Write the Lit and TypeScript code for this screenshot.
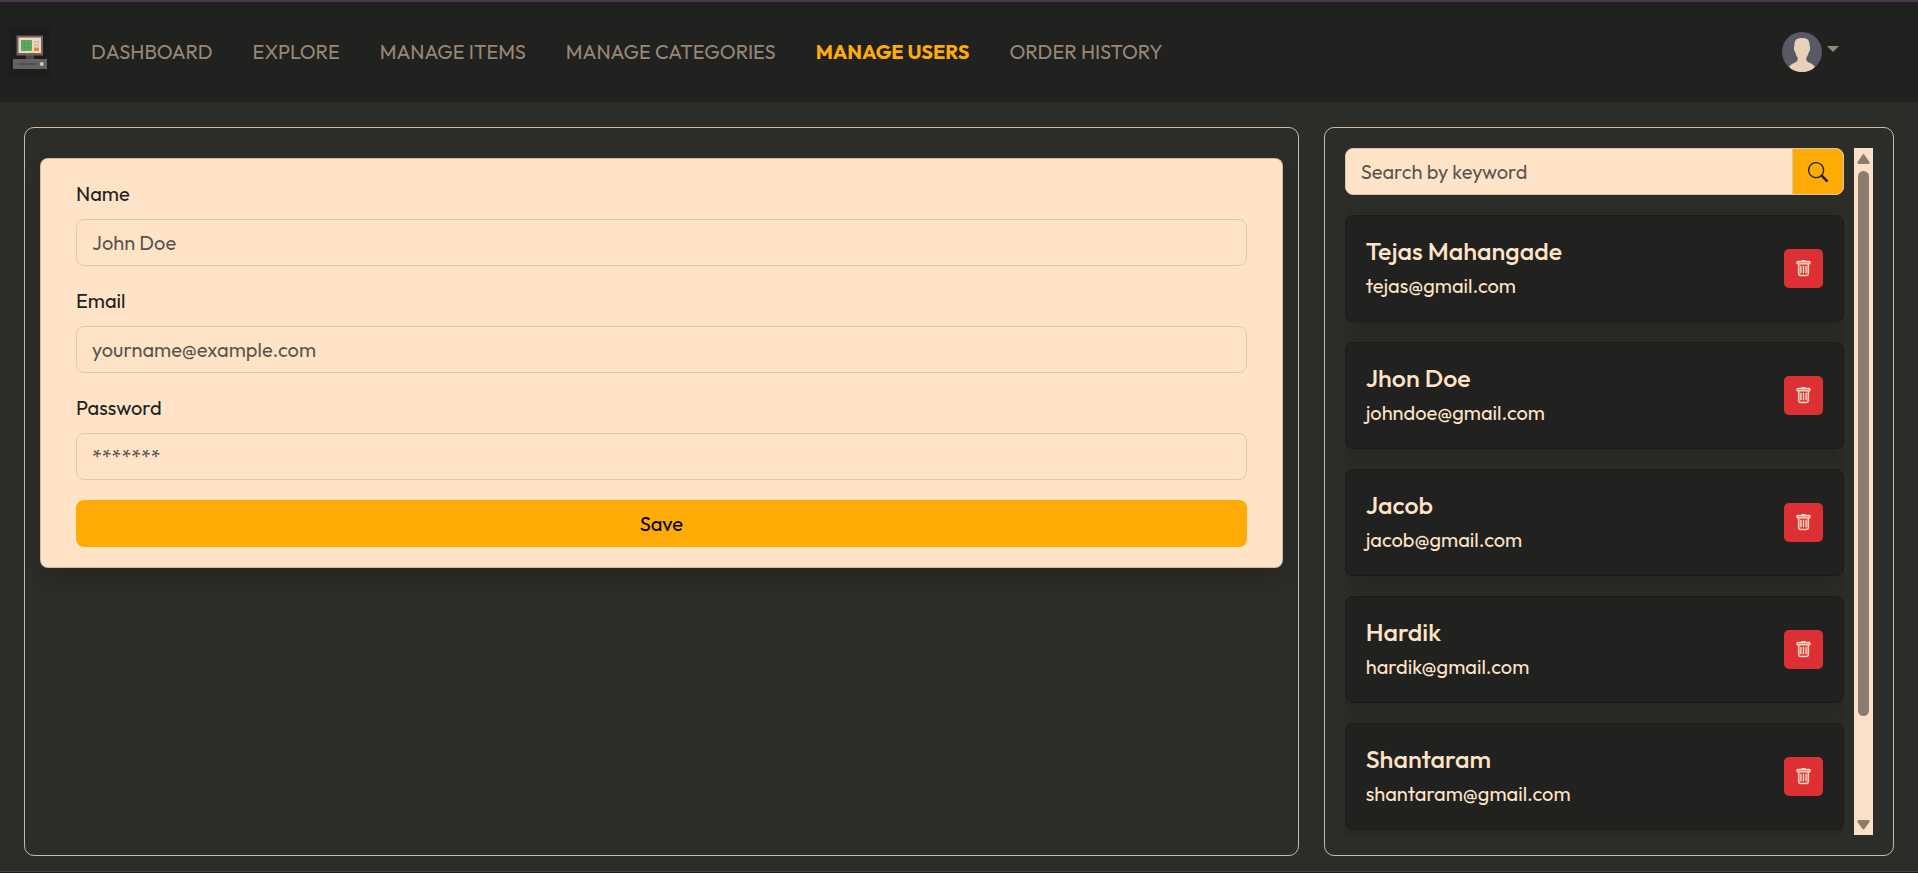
import { LitElement, css, html, svg } from "lit";
import { customElement, property, state } from "lit/decorators.js";
import { classMap } from "lit/directives/class-map.js";

interface User {
  name: string;
  email: string;
}

const LINKS = [
  "Dashboard",
  "Explore",
  "Manage Items",
  "Manage Categories",
  "Manage Users",
  "Order History",
];

const USERS: User[] = [
  { name: "Tejas Mahangade", email: "tejas@gmail.com" },
  { name: "Jhon Doe", email: "johndoe@gmail.com" },
  { name: "Jacob", email: "jacob@gmail.com" },
  { name: "Hardik", email: "hardik@gmail.com" },
  { name: "Shantaram", email: "shantaram@gmail.com" },
];

const logo = svg`
  <rect width="42" height="50" fill="#1e1d1b" />
  <rect x="17" y="28" width="8" height="5" fill="#4a4a48" />
  <rect x="7.500" y="8.500" width="26.500" height="20" fill="#6d655c" />
  <rect x="9.500" y="10.500" width="22.500" height="15.500" fill="#eed7be" />
  <rect x="12" y="13" width="11" height="11" fill="#5dab61" />
  <path d="M12 16.700h11M12 20.400h11M15.700 13v11M19.400 13v11" stroke="#4c9a52" stroke-width=".6" />
  <path d="M25 15h5M25 18h5" stroke="#c4b6a4" stroke-width="1.400" />
  <rect x="25" y="20.500" width="5" height="3.500" fill="#ee7d3e" />
  <rect x="4" y="32" width="34" height="10" fill="#646361" />
  <rect x="9" y="36.300" width="19" height="1.400" fill="#484846" />
  <circle cx="32.800" cy="37" r="1.900" fill="#dccab4" />`;

const avatar = svg`
  <defs><clipPath id="round"><circle cx="20" cy="20" r="20" /></clipPath></defs>
  <g clip-path="url(#round)">
    <rect width="40" height="40" fill="#595865" />
    <path fill="#e8d1b8" d="M12.500 12.500c0-4.500 2.300-6.500 7.500-6.500s7.500 2 7.500 6.500c.2 1.500.7 3 .5 5-.2 1.600-.9 2.300-1.400 3-.6 2.400-1.200 3.900-2.300 5.300-.3 1.800.3 3.400 1.700 4.200 2.500 1.300 5 2.200 6.800 4.500L30 40H10l-2.800-5.500c1.800-2.300 4.300-3.200 6.800-4.500 1.400-.8 2-2.400 1.700-4.200-1.100-1.400-1.700-2.900-2.300-5.300-.5-.7-1.200-1.400-1.400-3-.2-2 .3-3.500.5-5z" />
  </g>`;

const trash = svg`
  <path stroke="currentColor" stroke-width=".3" d="M5.500 5.500A.5.5 0 0 1 6 6v6a.5.5 0 0 1-1 0V6a.5.5 0 0 1 .5-.5m2.500 0a.5.5 0 0 1 .5.5v6a.5.5 0 0 1-1 0V6a.5.5 0 0 1 .5-.5m3 .5a.5.5 0 0 0-1 0v6a.5.5 0 0 0 1 0z" />
  <path stroke="currentColor" stroke-width=".4" d="M14.500 3a1 1 0 0 1-1 1H13v9a2 2 0 0 1-2 2H5a2 2 0 0 1-2-2V4h-.5a1 1 0 0 1-1-1V2a1 1 0 0 1 1-1H6a1 1 0 0 1 1-1h2a1 1 0 0 1 1 1h3.500a1 1 0 0 1 1 1zM4.118 4 4 4.059V13a1 1 0 0 0 1 1h6a1 1 0 0 0 1-1V4.059L11.882 4zM2.500 3h11V2h-11z" />`;

const magnifier = svg`
  <path d="M11.742 10.344a6.500 6.500 0 1 0-1.397 1.398h-.001q.044.060.098.115l3.850 3.850a1 1 0 0 0 1.415-1.414l-3.850-3.850a1 1 0 0 0-.115-.1zM12 6.500a5.500 5.500 0 1 1-11 0 5.500 5.500 0 0 1 11 0" />`;

@customElement("nav-bar")
class NavBar extends LitElement {
  static styles = css`
    :host {
      display: block;
    }
    .bar {
      display: flex;
      align-items: center;
      height: 100px;
      padding: 0 79px 0 9px;
      background: #212120;
      box-shadow: 0 2px 5px rgba(0, 0, 0, 0.075);
    }
    .brand {
      display: flex;
      margin-right: 40px;
    }
    .links {
      display: flex;
      gap: 40px;
      flex: 1;
      margin: 0;
      padding: 0;
      list-style: none;
    }
    .link {
      color: #998776;
      text-decoration: none;
      text-transform: uppercase;
    }
    .link.active {
      color: #ffab05;
      font-weight: 700;
    }
    .account {
      display: flex;
      gap: 5px;
      padding: 0;
      border: 0;
      background: none;
      cursor: pointer;
    }
    .caret {
      margin-top: 14px;
      border: 6px solid transparent;
      border-top-color: #998776;
      border-bottom: 0;
      height: 0;
    }
  `;

  @state() private active = "Manage Users";

  private select(event: Event, name: string) {
    event.preventDefault();
    this.active = name;
  }

  render() {
    return html`
      <nav class="bar">
        <a class="brand" href="#home" aria-label="Home">
          <svg width="42" height="50" viewBox="0 0 42 50">${logo}</svg>
        </a>
        <ul class="links">
          ${LINKS.map(
            (name) => html`<li>
              <a
                href="#"
                class=${classMap({ link: true, active: name === this.active })}
                @click=${(event: Event) => this.select(event, name)}
                >${name}</a
              >
            </li>`
          )}
        </ul>
        <button class="account" type="button" aria-label="Account">
          <svg width="40" height="40" viewBox="0 0 40 40">${avatar}</svg>
          <span class="caret"></span>
        </button>
      </nav>
    `;
  }
}

@customElement("user-form")
class UserForm extends LitElement {
  static styles = css`
    :host {
      display: block;
    }
    .card {
      display: flex;
      flex-direction: column;
      gap: 20px;
      padding: 20px 35px;
      border: 1px solid rgba(0, 0, 0, 0.175);
      border-radius: 8px;
      background: #ffe3c7;
      box-shadow: 0 10px 20px rgba(0, 0, 0, 0.15);
    }
    .field {
      display: flex;
      flex-direction: column;
      gap: 10px;
    }
    .label {
      color: #212121;
    }
    .input {
      box-sizing: border-box;
      width: 100%;
      height: 47px;
      padding: 7px 15px;
      border: 1px solid #e0c8b1;
      border-radius: 8px;
      background: transparent;
      color: #212529;
      font: inherit;
    }
    .input::placeholder {
      color: rgba(33, 37, 41, 0.75);
    }
    .save {
      height: 47px;
      border: 0;
      border-radius: 8px;
      background: #ffab05;
      color: #000;
      font: inherit;
      cursor: pointer;
    }
  `;

  private field(id: string, label: string, type: string, hint: string) {
    return html`<div class="field">
      <label class="label" for=${id}>${label}</label>
      <input class="input" id=${id} type=${type} placeholder=${hint} />
    </div>`;
  }

  render() {
    return html`
      <form class="card" @submit=${(event: Event) => event.preventDefault()}>
        ${this.field("name", "Name", "text", "John Doe")}
        ${this.field("email", "Email", "email", "yourname@example.com")}
        ${this.field("password", "Password", "password", "*******")}
        <button class="save" type="submit">Save</button>
      </form>
    `;
  }
}

@customElement("user-list")
class UserList extends LitElement {
  static styles = css`
    :host {
      display: flex;
      gap: 10px;
      min-height: 0;
    }
    .scroller {
      flex: 1;
      display: flex;
      flex-direction: column;
      gap: 20px;
      overflow-y: auto;
      scrollbar-width: none;
    }
    .search {
      display: flex;
      flex: none;
      box-sizing: border-box;
      height: 47px;
      border: 1px solid #dbc4ae;
      border-radius: 8px;
      overflow: hidden;
      background: #ffe3c7;
    }
    .keyword {
      flex: 1;
      min-width: 0;
      padding: 0 15px;
      border: 0;
      background: none;
      color: #212529;
      font: inherit;
    }
    .keyword::placeholder {
      color: rgba(33, 37, 41, 0.75);
    }
    .find {
      padding: 0 15px;
      border: 0;
      border-left: 1px solid #dbc4ae;
      background: #ffab05;
      color: #212120;
      cursor: pointer;
    }
    .icon {
      display: block;
      fill: currentColor;
    }
    .user {
      display: flex;
      align-items: center;
      justify-content: space-between;
      flex: none;
      padding: 20px;
      border: 1px solid #1b1b1b;
      border-radius: 8px;
      background: #212120;
      color: #ffe3c7;
      box-shadow: 0 10px 20px rgba(0, 0, 0, 0.15);
    }
    .name {
      margin: 0 0 5px;
      font-size: 25px;
      line-height: 30px;
      font-weight: 500;
    }
    .email {
      margin: 0;
    }
    .delete {
      padding: 11px;
      border: 0;
      border-radius: 5px;
      background: #dc3035;
      color: #ffe3c7;
      cursor: pointer;
    }
    .track {
      display: flex;
      flex-direction: column;
      align-items: center;
      justify-content: space-between;
      width: 19px;
      background: #fae0c8;
    }
    .arrow {
      display: block;
      flex: none;
      fill: #8c7c6d;
    }
    .rail {
      flex: 1;
      width: 11px;
    }
    .thumb {
      height: 85%;
      border-radius: 6px;
      background: #8c7c6d;
    }
  `;

  @property({ attribute: false }) users: User[] = [];

  render() {
    return html`
      <div class="scroller">
        <form class="search" role="search">
          <input
            class="keyword"
            type="text"
            aria-label="Search by keyword"
            placeholder="Search by keyword"
          />
          <button class="find" type="button" aria-label="Search">
            <svg class="icon" width="20" height="20" viewBox="0 0 16 16">${magnifier}</svg>
          </button>
        </form>
        ${this.users.map(
          (user) => html`<article class="user">
            <div>
              <h5 class="name">${user.name}</h5>
              <p class="email">${user.email}</p>
            </div>
            <button class="delete" type="button" aria-label="Delete ${user.name}">
              <svg class="icon" width="17" height="17" viewBox="0 0 16 16">${trash}</svg>
            </button>
          </article>`
        )}
      </div>
      <div class="track" aria-hidden="true">
        <svg class="arrow" width="13" height="23" viewBox="0 0 13 23">
          <path d="M5.600 6.700Q6.500 5.500 7.400 6.700L12.500 14Q13 15.800 11.500 16H1.500Q0 15.800.5 14z" />
        </svg>
        <div class="rail"><div class="thumb"></div></div>
        <svg class="arrow" width="13" height="23" viewBox="0 0 13 23">
          <path d="M5.600 17Q6.500 18.200 7.400 17L12.500 10Q13 8.200 11.500 8H1.500Q0 8.200.5 10z" />
        </svg>
      </div>
    `;
  }
}

@customElement("app-root")
class AppRoot extends LitElement {
  static styles = css`
    :host {
      display: flex;
      flex-direction: column;
      box-sizing: border-box;
      height: 100vh;
      border-top: 2px solid #4b3a4b;
      border-bottom: 1px solid #1a191c;
      background: #2c2c28;
      font-family: Outfit, Lato, sans-serif;
      font-size: 20px;
      line-height: 30px;
    }
    .main {
      flex: 1;
      min-height: 0;
      display: grid;
      grid-template-columns: 38fr 17fr;
      grid-template-rows: minmax(0, 1fr);
      gap: 25px;
      padding: 25px 24px 15px;
      border-bottom: 1px solid #444347;
    }
    .panel {
      border: 1px solid #d1b8a0;
      border-radius: 10px;
    }
    .form {
      padding: 30px 15px;
    }
    .list {
      display: flex;
      padding: 20px;
    }
    .users {
      flex: 1;
    }
  `;

  render() {
    return html`
      <nav-bar></nav-bar>
      <main class="main">
        <section class="panel form"><user-form></user-form></section>
        <section class="panel list">
          <user-list class="users" .users=${USERS}></user-list>
        </section>
      </main>
    `;
  }
}
